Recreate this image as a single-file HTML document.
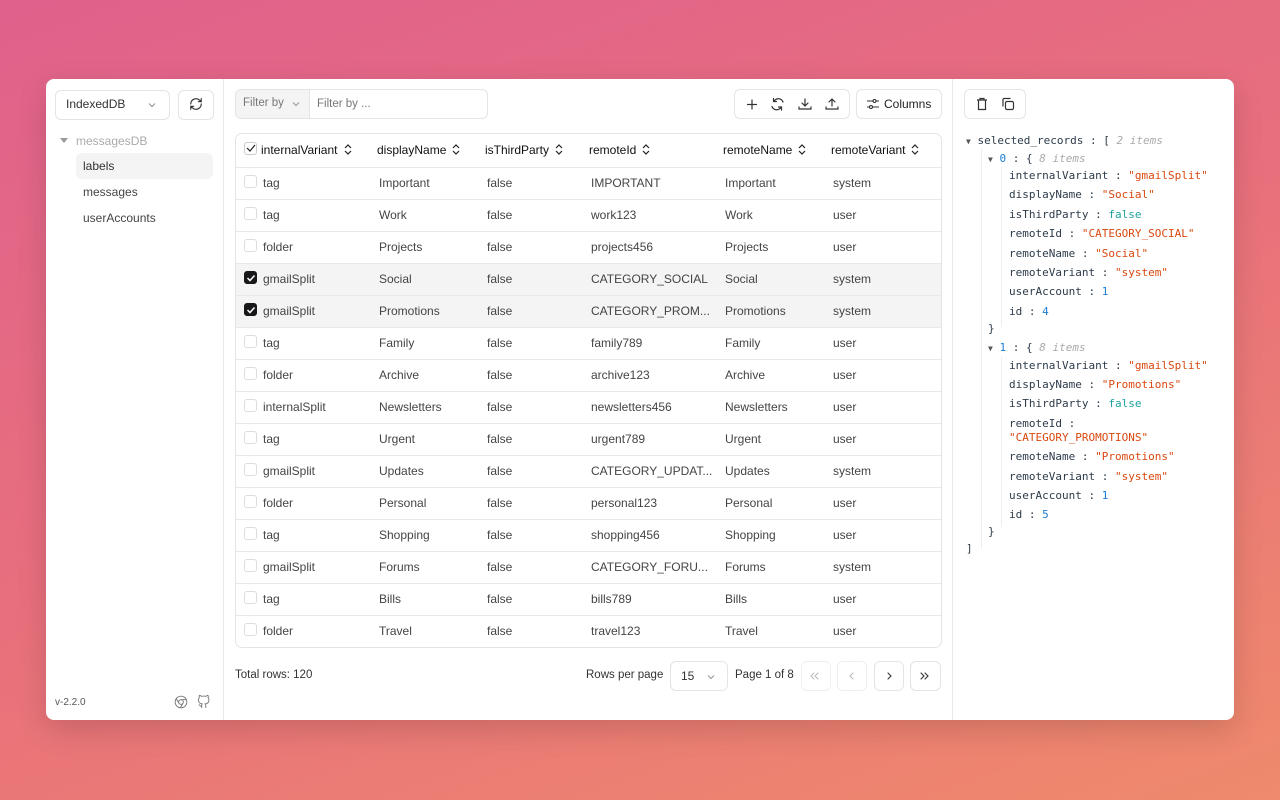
<!DOCTYPE html>
<html><head><meta charset="utf-8"><style>
*{box-sizing:border-box;margin:0;padding:0}
body{width:1280px;height:800px;overflow:hidden;font-family:"Liberation Sans",sans-serif;background:linear-gradient(160deg,#e0618c 0%,#e8707c 50%,#ef8a6c 100%);position:relative;color:#222}
.win{position:absolute;left:46px;top:79px;width:1188px;height:641px;background:#fff;border-radius:8px;overflow:hidden;box-shadow:0 10px 30px rgba(0,0,0,.15)}
.side{position:absolute;left:0;top:0;width:178px;height:641px;border-right:1px solid #e8e8e8}
.main{position:absolute;left:178px;top:0;width:728px;height:641px}
.right{position:absolute;left:906px;top:0;width:282px;height:641px;border-left:1px solid #e8e8e8}
.btn{position:absolute;border:1px solid #e4e4e7;border-radius:6px;background:#fff}
.abs{position:absolute;font-size:12px;white-space:nowrap}
svg{position:absolute}
.tbl{position:absolute;left:11px;top:54px;width:707px;border:1px solid #e4e4e7;border-radius:7px;overflow:hidden}
.row{position:relative;height:32px;border-top:1px solid #e8e8e8;font-size:12px;color:#444}
.row.h{height:33px;border-top:none;color:#111;font-size:12px}
.row.sel{background:#f4f4f5}
.row span{position:absolute;top:8px;white-space:nowrap}
.row.h span{top:9px}
.row.h span svg{position:static;display:inline-block;vertical-align:-1px;margin-left:6px}
.cb{position:absolute;left:8px;top:7px;width:13px;height:13px;border:1px solid #ddd;border-radius:3px;background:#fff}
.cb.on{background:#18181b;border-color:#18181b}
.json{position:absolute;font-family:"DejaVu Sans Mono","Liberation Mono",monospace;font-size:11px;white-space:nowrap;color:#2d3b4a}
.s{color:#d9480f}.b{color:#1aa39a}.n{color:#1c7ed6}.g{color:#aaa;font-style:italic}
</style></head><body>
<div class="win">
<div class="side">
 <div class="btn" style="left:9px;top:11px;width:115px;height:30px"></div>
 <div class="abs" style="left:20px;top:18px;color:#333">IndexedDB</div>
 <svg style="left:101px;top:21px" width="10" height="10" viewBox="0 0 10 10"><path d="M2 3.5l3 3 3-3" fill="none" stroke="#999" stroke-width="1.2"/></svg>
 <div class="btn" style="left:132px;top:11px;width:36px;height:30px"></div>
 <svg style="left:143px;top:18px" width="14" height="14" viewBox="0 0 24 24" fill="none" stroke="#333" stroke-width="2" stroke-linecap="round"><path d="M3 12a9 9 0 0 1 15-6.7L21 8M21 3v5h-5M21 12a9 9 0 0 1-15 6.7L3 16M3 21v-5h5"/></svg>
 <svg style="left:14px;top:59px" width="8" height="6"><path d="M0 0h8L4 5z" fill="#999"/></svg>
 <div class="abs" style="left:30px;top:55px;color:#aaa;font-size:12px">messagesDB</div>
 <div style="position:absolute;left:30px;top:74px;width:137px;height:26px;background:#f4f4f5;border-radius:6px"></div>
 <div class="abs" style="left:37px;top:80px;color:#333">labels</div>
 <div class="abs" style="left:37px;top:106px;color:#444">messages</div>
 <div class="abs" style="left:37px;top:132px;color:#444">userAccounts</div>
 <div class="abs" style="left:9px;top:618px;font-size:10px;color:#555">v-2.2.0</div>
 <svg style="left:128px;top:616px" width="14" height="14" viewBox="0 0 24 24" fill="none" stroke="#777" stroke-width="1.6"><circle cx="12" cy="12" r="10"/><circle cx="12" cy="12" r="4"/><path d="M12 8h9M8.5 14L4 6.5M15.5 14L11 21.5"/></svg>
 <svg style="left:151px;top:616px" width="14" height="14" viewBox="0 0 24 24" fill="none" stroke="#777" stroke-width="1.6"><path d="M9 19c-4 1.5-4-2-6-2.5M15 22v-4a3.5 3.5 0 0 0-1-2.6c3.2-.4 6.5-1.6 6.5-7a5.4 5.4 0 0 0-1.5-3.8 5 5 0 0 0-.1-3.8s-1.2-.4-3.9 1.5a13 13 0 0 0-7 0C5.3.4 4.1.8 4.1.8a5 5 0 0 0-.1 3.8A5.4 5.4 0 0 0 2.5 8.4c0 5.4 3.3 6.6 6.5 7A3.5 3.5 0 0 0 8 18v4"/></svg>
</div>
<div class="main">
 <div class="btn" style="left:11px;top:10px;width:253px;height:30px"></div>
 <div style="position:absolute;left:12px;top:11px;width:74px;height:28px;background:#f4f4f5;border-right:1px solid #e4e4e7;border-radius:5px 0 0 5px"></div>
 <div class="abs" style="left:19px;top:18px;color:#777;font-size:11.5px">Filter by</div>
 <svg style="left:67px;top:20px" width="10" height="10" viewBox="0 0 10 10"><path d="M2 3.5l3 3 3-3" fill="none" stroke="#999" stroke-width="1.1"/></svg>
 <div class="abs" style="left:93px;top:19px;color:#777;font-size:11.5px">Filter by ...</div>
 <div class="btn" style="left:510px;top:10px;width:116px;height:30px"></div>
 <svg style="left:520px;top:18px" width="100" height="14" viewBox="0 0 100 14" fill="none" stroke="#333" stroke-width="1.2" stroke-linecap="round">
  <path d="M8 3v9M3.5 7.5h9"/>
  <path d="M39 5a5 5 0 0 0-8.5-1.5L29.5 4.5M29.5 1.5v3h3M28 9.5a5 5 0 0 0 8.5 1.5l1-1M37.5 13v-3h-3"/>
  <path d="M61 2v7M58 6l3 3 3-3M55 10v2h12v-2"/>
  <path d="M88 9V2M85 5l3-3 3 3M82 10v2h12v-2"/>
 </svg>
 <div class="btn" style="left:632px;top:10px;width:86px;height:30px"></div>
 <svg style="left:642px;top:18px" width="14" height="14" viewBox="0 0 14 14" fill="none" stroke="#333" stroke-width="1.1"><path d="M1 4h6M10 4h3M1 10h2M7 10h6"/><circle cx="8.5" cy="4" r="1.5"/><circle cx="5" cy="10" r="1.5"/></svg>
 <div class="abs" style="left:660px;top:18px;color:#222">Columns</div>
 <div class="tbl">
  <div class="row h"><div class="cb" style="border-color:#ccc;top:8px"></div><svg style="left:9px;top:8px" width="12" height="12"><path d="M2 6l3 3 5-6" fill="none" stroke="#222" stroke-width="1.2"/></svg></div>
 </div>
 <div class="abs" style="left:11px;top:590px;color:#333;font-size:11.5px">Total rows: 120</div>
 <div class="abs" style="left:362px;top:590px;color:#333;font-size:11.5px">Rows per page</div>
 <div class="btn" style="left:446px;top:582px;width:58px;height:30px"></div>
 <div class="abs" style="left:457px;top:590px;color:#333">15</div>
 <svg style="left:482px;top:593px" width="10" height="10" viewBox="0 0 10 10"><path d="M2 3.5l3 3 3-3" fill="none" stroke="#999" stroke-width="1.1"/></svg>
 <div class="abs" style="left:511px;top:590px;color:#333;font-size:11.5px">Page 1 of 8</div>
 <div class="btn" style="left:577px;top:582px;width:30px;height:30px;border-color:#eee"></div>
 <div class="btn" style="left:613px;top:582px;width:30px;height:30px;border-color:#eee"></div>
 <div class="btn" style="left:650px;top:582px;width:30px;height:30px"></div>
 <div class="btn" style="left:686px;top:582px;width:31px;height:30px"></div>
 <svg style="left:577px;top:582px" width="140" height="30" fill="none" stroke-width="1.1" stroke-linecap="round">
  <path d="M13 12l-3 3 3 3M17 12l-3 3 3 3" stroke="#bbb"/>
  <path d="M52 12l-3 3 3 3" stroke="#bbb"/>
  <path d="M87 12l3 3-3 3" stroke="#333"/>
  <path d="M120 12l3 3-3 3M124 12l3 3-3 3" stroke="#333"/>
 </svg>
</div>
<div class="right">
 <div class="btn" style="left:11px;top:10px;width:62px;height:30px"></div>
 <svg style="left:22px;top:18px" width="14" height="14" viewBox="0 0 14 14" fill="none" stroke="#333" stroke-width="1.2"><path d="M2 3h10M5 3V1.5h4V3M3.5 3v9.5h7V3"/></svg>
 <svg style="left:48px;top:18px" width="14" height="14" viewBox="0 0 14 14" fill="none" stroke="#333" stroke-width="1.2"><rect x="4.5" y="4.5" width="8" height="8" rx="1.5"/><path d="M2 9.5V2.5a1 1 0 0 1 1-1h6.5"/></svg>
 <div style="position:absolute;left:28px;top:70px;width:1px;height:400px;border-left:1px solid #eee"></div>
 <div style="position:absolute;left:48px;top:88px;width:1px;height:160px;border-left:1px solid #eee"></div>
 <div style="position:absolute;left:48px;top:278px;width:1px;height:170px;border-left:1px solid #eee"></div>
 <div id="js"></div>
</div>
</div>
<script>
const sort='<svg width="8" height="11" viewBox="0 0 8 11" fill="none" stroke="#222" stroke-width="1.2"><path d="M1 4l3-3 3 3M1 7l3 3 3-3"/></svg>';
const hd=[[25,'internalVariant'],[141,'displayName'],[249,'isThirdParty'],[353,'remoteId'],[487,'remoteName'],[595,'remoteVariant']];
document.querySelector('.row.h').insertAdjacentHTML('beforeend',hd.map(x=>`<span style="left:${x[0]}px">${x[1]}${sort}</span>`).join(''));
const rows=[["tag","Important","IMPORTANT","Important","system"],["tag","Work","work123","Work","user"],["folder","Projects","projects456","Projects","user"],["gmailSplit","Social","CATEGORY_SOCIAL","Social","system",1],["gmailSplit","Promotions","CATEGORY_PROM...","Promotions","system",1],["tag","Family","family789","Family","user"],["folder","Archive","archive123","Archive","user"],["internalSplit","Newsletters","newsletters456","Newsletters","user"],["tag","Urgent","urgent789","Urgent","user"],["gmailSplit","Updates","CATEGORY_UPDAT...","Updates","system"],["folder","Personal","personal123","Personal","user"],["tag","Shopping","shopping456","Shopping","user"],["gmailSplit","Forums","CATEGORY_FORU...","Forums","system"],["tag","Bills","bills789","Bills","user"],["folder","Travel","travel123","Travel","user"]];
let h="";for(const r of rows){h+=`<div class="row${r[5]?' sel':''}"><div class="cb${r[5]?' on':''}"></div>${r[5]?'<svg style="left:9px;top:8px" width="12" height="12"><path d="M2.5 6l2.5 2.5 4.5-5" fill="none" stroke="#fff" stroke-width="1.5"/></svg>':''}<span style="left:27px">${r[0]}</span><span style="left:143px">${r[1]}</span><span style="left:251px">false</span><span style="left:355px">${r[2]}</span><span style="left:489px">${r[3]}</span><span style="left:597px">${r[4]}</span></div>`}
document.querySelector('.tbl').insertAdjacentHTML('beforeend',h);
const L=[[13,54,'<span style="color:#555;font-size:8px">▼</span> selected_records : [ <span class="g">2 items</span>'],[35,72,'<span style="color:#555;font-size:8px">▼</span> <span class="n">0</span> : { <span class="g">8 items</span>'],[56,89,'internalVariant : <span class="s">"gmailSplit"</span>'],[56,108,'displayName : <span class="s">"Social"</span>'],[56,128,'isThirdParty : <span class="b">false</span>'],[56,147,'remoteId : <span class="s">"CATEGORY_SOCIAL"</span>'],[56,167,'remoteName : <span class="s">"Social"</span>'],[56,186,'remoteVariant : <span class="s">"system"</span>'],[56,205,'userAccount : <span class="n">1</span>'],[56,225,'id : <span class="n">4</span>'],[35,242,'}'],[35,261,'<span style="color:#555;font-size:8px">▼</span> <span class="n">1</span> : { <span class="g">8 items</span>'],[56,279,'internalVariant : <span class="s">"gmailSplit"</span>'],[56,298,'displayName : <span class="s">"Promotions"</span>'],[56,317,'isThirdParty : <span class="b">false</span>'],[56,337,'remoteId :'],[56,351,'<span class="s">"CATEGORY_PROMOTIONS"</span>'],[56,370,'remoteName : <span class="s">"Promotions"</span>'],[56,390,'remoteVariant : <span class="s">"system"</span>'],[56,409,'userAccount : <span class="n">1</span>'],[56,428,'id : <span class="n">5</span>'],[35,445,'}'],[13,462,']']];
document.getElementById('js').innerHTML=L.map(l=>`<div class="json" style="left:${l[0]}px;top:${l[1]+1}px">${l[2]}</div>`).join('');
</script>
</body></html>
